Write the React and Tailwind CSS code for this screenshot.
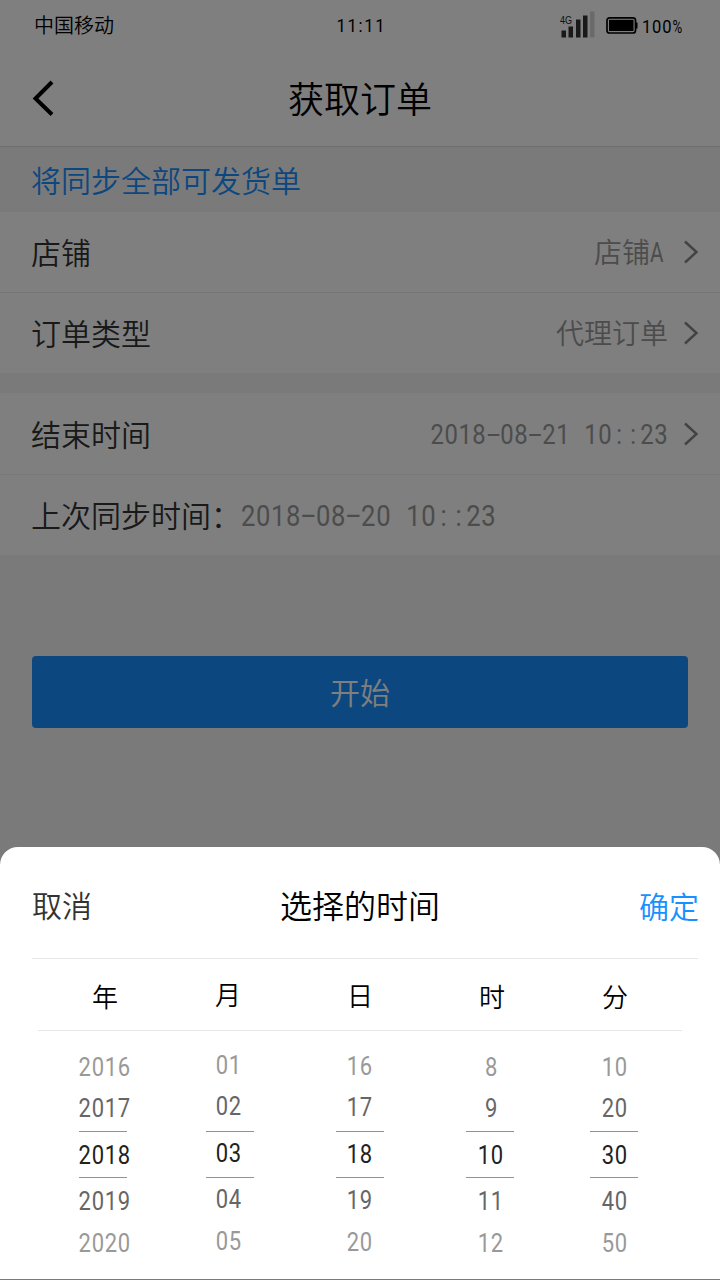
import React from 'react';

const SEPARATORS = {
  '-': <span className="inline-block w-[0.586em] -translate-y-px scale-x-[2] text-center font-normal tracking-normal">-</span>,
  ':': <span className="inline-block w-[0.586em] text-center tracking-normal">:</span>,
  ' ': <span className="inline-block w-[0.586em] whitespace-pre tracking-normal"> </span>,
};

function Stamp({ value, className }) {
  return (
    <span className={`inline-block scale-x-[0.88] whitespace-nowrap font-['Roboto',sans-serif] font-normal tracking-[0.0245em] text-[#999] ${className}`}>
      {value.split(/([-: ])/).map((part, i) => (
        <React.Fragment key={i}>{SEPARATORS[part] || part}</React.Fragment>
      ))}
    </span>
  );
}

function Arrow() {
  return (
    <svg className="h-6 w-4 shrink-0" viewBox="0 0 16 24" fill="none" stroke="#858585" strokeWidth="2.400">
      <path d="M2 1.500 13.500 12 2 22.500" />
    </svg>
  );
}

function Row({ label, className, children }) {
  return (
    <div className={`flex items-center pl-[31px] pr-[21px] ${className}`}>
      <span className="-translate-y-px text-[30px] leading-none text-[#333]">{label}</span>
      {children}
    </div>
  );
}

function StatusBar() {
  return (
    <div className="flex h-[50px] items-center justify-between pl-[34px] pr-[36px] text-black">
      <span className="w-[124px] text-[20px] leading-none">中国移动</span>
      <span className="translate-x-[2px] scale-x-[0.88] font-['Roboto',sans-serif] text-[19px] font-normal leading-none tracking-[1.9px]">11:11</span>
      <div className="flex w-[124px] items-center">
        <svg className="h-7 w-[78px] shrink-0" viewBox="0 0 78 28">
          <text x="0" y="13" fontSize="11" fontFamily="Liberation Sans, sans-serif" fill="#222" textLength="12" lengthAdjust="spacingAndGlyphs">4G</text>
          <path d="M1.500 19.500h4.500v7h-4.500zM8.500 15.500h4.500v11h-4.500zM16 8.500h4.500v18h-4.500zM23 4.500h4.500v22h-4.500z" fill="#333" />
          <path d="M30 .5h4.500v26h-4.500z" fill="#d4d4d4" />
          <rect x="47" y="6.800" width="28.500" height="15.200" rx="2.500" fill="none" stroke="#000" strokeWidth="1.700" />
          <rect x="49" y="8.800" width="24.500" height="11.200" fill="#000" />
          <path d="M76 11.500h1.500v6H76z" fill="#000" />
        </svg>
        <span className="ml-[4px] flex origin-left translate-y-px scale-x-[0.87] items-center font-['Roboto',sans-serif] text-[19px] font-normal leading-none tracking-[0.9px]">
          100<span className="inline-block w-3 origin-left scale-x-[0.8]">%</span>
        </span>
      </div>
    </div>
  );
}

const COLUMNS = [
  { title: '年', values: ['2016', '2017', '2018', '2019', '2020'], line: '-translate-x-px', shift: 'translate-x-px translate-y-px', head: 'translate-x-px translate-y-px' },
  { title: '月', values: ['01', '02', '03', '04', '05'], line: 'translate-x-[2px]', shift: 'translate-x-px -translate-y-px', head: '-translate-y-px' },
  { title: '日', values: ['16', '17', '18', '19', '20'], line: '', shift: '', head: '' },
  { title: '时', values: ['8', '9', '10', '11', '12'], line: '-translate-x-px', shift: 'translate-y-px', head: 'translate-x-px translate-y-px' },
  { title: '分', values: ['10', '20', '30', '40', '50'], line: '', shift: 'translate-x-px translate-y-px', head: 'translate-x-px translate-y-px' },
];

const ROW_STYLES = [
  'h-9 pb-px text-[#999]',
  'h-[46px] pb-px text-[#666]',
  'h-[47px] text-[#222]',
  'h-[46px] pb-px text-[#666]',
  'h-[38px] pb-px text-[#999]',
];

function PickerColumn({ column }) {
  return (
    <div className="flex flex-col items-center">
      {column.values.map((value, i) => (
        <div key={value} className={`grid place-items-center ${ROW_STYLES[i]}`}>
          {i === 2 && (
            <span className={`col-start-1 row-start-1 h-[47px] w-12 border-y border-[#f26b5e] ${column.line}`} />
          )}
          <span className={`col-start-1 row-start-1 scale-x-[0.88] font-['Roboto',sans-serif] text-[25px] font-normal leading-none tracking-[0.8px] ${column.shift}`}>
            {value}
          </span>
        </div>
      ))}
    </div>
  );
}

function TimeSheet() {
  return (
    <div className="absolute inset-x-0 bottom-px h-[432px] rounded-t-[18px] bg-white">
      <div className="mx-8 mr-[22px] flex h-28 items-center justify-between border-b border-[#e8e8e8] pt-[3px] leading-none">
        <span className="w-[60px] text-[30px] text-[#333]">取消</span>
        <span className="-translate-x-[5px] text-[32px] text-black">选择的时间</span>
        <span className="w-[60px] translate-x-px translate-y-px text-[30px] text-[#1890ff]">确定</span>
      </div>
      <div className="ml-[38px] mr-[38px] grid h-[72px] grid-cols-[124px_124px_140px_122px_124px] items-center border-b border-[#e8e8e8] pl-1">
        {COLUMNS.map((c) => (
          <span key={c.title} className={`text-center text-[26px] leading-none text-black ${c.head}`}>{c.title}</span>
        ))}
      </div>
      <div className="ml-[42px] mt-[18px] grid grid-cols-[124px_124px_140px_122px_124px]">
        {COLUMNS.map((c) => (
          <PickerColumn key={c.title} column={c} />
        ))}
      </div>
    </div>
  );
}

export default function App() {
  return (
    <div className="relative h-[1280px] w-[720px] overflow-hidden bg-[#f4f4f4] font-['Noto_Sans_CJK_SC',sans-serif] font-[350]">
      <header className="h-[147px] border-b border-[#dcdcdc] bg-white">
        <StatusBar />
        <div className="grid h-24 grid-cols-[60px_1fr_60px] items-center px-8">
          <svg className="h-9 w-[22px]" viewBox="0 0 22 36" fill="none" stroke="#000" strokeWidth="4">
            <path d="M20 2 3.500 18.500 20 34.500" />
          </svg>
          <h1 className="-translate-y-px text-center text-[36px] font-[350] leading-none text-black">获取订单</h1>
        </div>
      </header>
      <p className="flex h-[65px] items-center pb-[2px] pl-[31px] text-[30px] leading-none text-[#1890ff]">将同步全部可发货单</p>
      <section className="bg-white">
        <Row label="店铺" className="h-[81px] border-b border-[#ededed]">
          <span className="ml-auto mr-[19px] text-[28px] leading-none text-[#999]">店铺<span className="inline-block w-[14px] origin-left -translate-y-px scale-x-[0.74] font-['Roboto',sans-serif] font-normal">A</span></span>
          <Arrow />
        </Row>
        <Row label="订单类型" className="h-20">
          <span className="ml-auto mr-[15px] -translate-y-px text-[28px] leading-none text-[#999]">代理订单</span>
          <Arrow />
        </Row>
      </section>
      <section className="mt-5 bg-white">
        <Row label="结束时间" className="h-[82px] border-b border-[#f0f0f0]">
          <Stamp value="2018-08-21 10::23" className="ml-auto mr-[15px] origin-right translate-y-[2px] text-[27.1px]" />
          <Arrow />
        </Row>
        <Row label="上次同步时间：" className="h-20">
          <Stamp value="2018-08-20 10::23" className="translate-y-[2px] origin-left text-[29.1px]" />
        </Row>
      </section>
      <button className="mx-8 mt-[101px] flex h-[72px] w-[656px] items-center justify-center rounded-[4px] bg-[#1890ff] pb-[2px] text-[30px] font-[350] leading-none text-white">
        开始
      </button>
      <div className="absolute inset-0 bg-black/50" />
      <TimeSheet />
    </div>
  );
}
